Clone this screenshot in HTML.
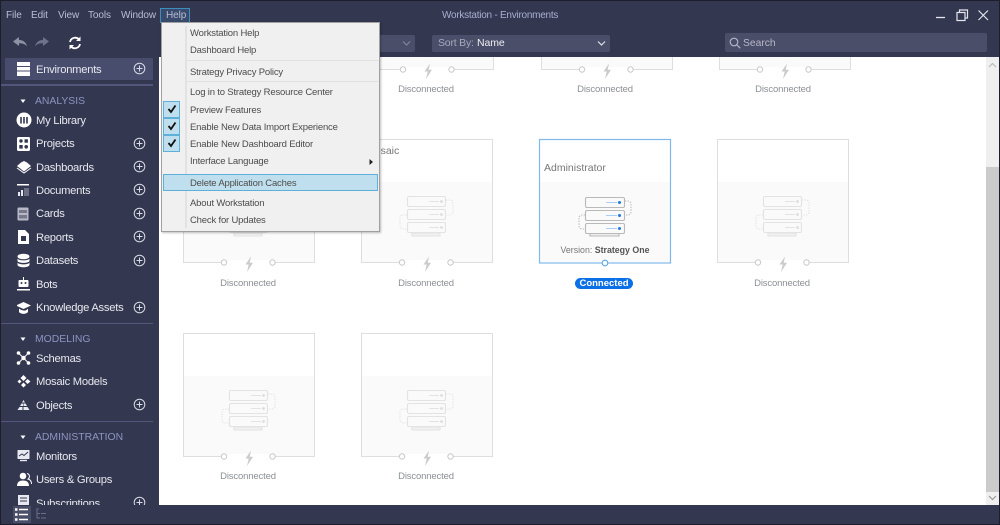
<!DOCTYPE html>
<html lang="en"><head><meta charset="utf-8"><title>Workstation - Environments</title>
<style>
*{box-sizing:border-box;margin:0;padding:0}
html,body{width:1000px;height:525px;overflow:hidden;background:#33374f;font-family:"Liberation Sans",sans-serif}
.abs,.t,.n,.m,.lab,.sec,.nav,svg.i,svg.p{position:absolute}
.t{font-size:10px;letter-spacing:-.1px;color:#b9bdd6;white-space:nowrap;line-height:14px;top:9px}
#content{position:absolute;left:159px;top:57px;width:840px;height:448px;background:#fff;overflow:hidden}
.card{position:absolute;width:132px;height:140px;overflow:visible}
.lab{width:132px;text-align:center;font-size:9.5px;letter-spacing:-.15px;color:#8c8f96;line-height:14px;white-space:nowrap}
.nav{left:36px;font-size:11.2px;letter-spacing:-.25px;color:#e8e9f0;line-height:16px;white-space:nowrap}
.sec{left:35px;font-size:10.4px;color:#8d94c2;line-height:14px;white-space:nowrap}
.sep{position:absolute;left:1px;width:152px;height:1px;background:#51567a}
svg.p{left:133px;width:13px;height:13px}
svg.i{left:16px;width:16px;height:16px}
.m{left:190px;font-size:9.5px;letter-spacing:-.18px;color:#4c4c4c;line-height:14px;white-space:nowrap}
.ms{position:absolute;left:187px;width:191px;height:1px;background:#e0e0e0}
.ck{position:absolute;left:163px;width:17px;height:17px;background:#bfdfee;border:1px solid #5fb0d9}
.ck svg{position:absolute;left:3px;top:2px;width:10px;height:10px}
</style></head><body>
<svg width="0" height="0" style="position:absolute">
<defs>
<g id="srv" fill="#fafafa" stroke="#e3e3e3" stroke-width="1.1">
<path d="M51 94h28v3H51z" fill="#f0f0f0"/>
<rect x="46.5" y="57.5" width="38" height="10" rx="1.5"/>
<rect x="46.5" y="70.5" width="38" height="10" rx="1.5"/>
<rect x="46.5" y="83.5" width="38" height="10" rx="1.5"/>
<path d="M85 61h4a3 3 0 0 1 3 3v9a3 3 0 0 1-3 3h-4M46 76h-4a3 3 0 0 0-3 3v8a3 3 0 0 0 3 3h4" fill="none" stroke-dasharray="1.3 1.3"/>
<path d="M68 62.500h10M68 75.500h10M68 88.500h10" fill="none" stroke-width=".9"/>
<circle cx="80.500" cy="62.500" r="1.400" fill="#ddd" stroke="none"/>
<circle cx="80.500" cy="75.500" r="1.400" fill="#ddd" stroke="none"/>
<circle cx="80.500" cy="88.500" r="1.400" fill="#ddd" stroke="none"/>
</g>
<g id="card">
<rect x=".5" y=".5" width="131" height="123" fill="#fff"/>
<rect x="1" y="43" width="130" height="80" fill="#fafafa"/>
<path d="M38 123.500H.5V.5h131v123H92.500" fill="none" stroke="#dedede"/>
<rect x="44" y="121" width="43" height="3" fill="#fff"/>
<circle cx="41" cy="123.500" r="2.700" fill="#fff" stroke="#c9c9c9"/>
<circle cx="89.500" cy="123.500" r="2.700" fill="#fff" stroke="#c9c9c9"/>
<path d="M68 117.500L62.500 125.500h3.200L64 133l6-9.200h-3.300z" fill="#cbcbcb"/>
<use href="#srv"/>
</g>
<g id="plus" fill="none" stroke="#d8dae6"><circle cx="6.500" cy="6.500" r="5.300"/><path d="M6.500 3.500v6M3.500 6.500h6"/></g>
</defs>
</svg>

<div id="content">
<svg class="card" style="left:25px;top:-111px"><use href="#card"/></svg>
<svg class="card" style="left:203px;top:-111px"><use href="#card"/></svg>
<svg class="card" style="left:382px;top:-111px"><use href="#card"/></svg>
<svg class="card" style="left:560px;top:-111px"><use href="#card"/></svg>
<div class="lab" style="left:23px;top:26px">Disconnected</div>
<div class="lab" style="left:201px;top:26px">Disconnected</div>
<div class="lab" style="left:380px;top:26px">Disconnected</div>
<div class="lab" style="left:558px;top:26px">Disconnected</div>

<svg class="card" style="left:24px;top:82px"><use href="#card"/></svg>
<svg class="card" style="left:202px;top:82px"><use href="#card"/></svg>
<div class="abs" style="left:207px;top:87px;font-size:10.5px;color:#777;line-height:14px">Mosaic</div>
<svg class="card" style="left:558px;top:82px"><use href="#card"/></svg>
<div class="lab" style="left:23px;top:220px">Disconnected</div>
<div class="lab" style="left:201px;top:220px">Disconnected</div>
<div class="lab" style="left:557px;top:220px">Disconnected</div>

<svg class="card" style="left:380px;top:82px">
<rect x=".5" y=".5" width="131" height="123.500" fill="#fff"/>
<rect x="1" y="43" width="130" height="80" fill="#fafafa"/>
<g fill="#fafafa" stroke="#b9b9b9" stroke-width="1.100">
<path d="M51 94h29v3H51z" fill="#eee"/>
<rect x="46.500" y="58.500" width="39" height="10" rx="1.500"/>
<rect x="46.500" y="71.500" width="39" height="10" rx="1.500"/>
<rect x="46.500" y="84.500" width="39" height="10" rx="1.500"/>
<path d="M86 62h3a3 3 0 0 1 3 3v8a3 3 0 0 1-3 3h-3M46 76h-3a3 3 0 0 0-3 3v8a3 3 0 0 0 3 3h3" fill="none" stroke-dasharray="1.300 1.300"/>
</g>
<path d="M67 63.500h11M67 76.500h11M67 89.500h11" stroke="#a9cdf3"/>
<circle cx="80.500" cy="63.500" r="1.500" fill="#1f78e6"/><circle cx="80.500" cy="76.500" r="1.500" fill="#1f78e6"/><circle cx="80.500" cy="89.500" r="1.500" fill="#1f78e6"/>
<rect x=".5" y=".5" width="131" height="123.500" fill="none" stroke="#7fb9ec" stroke-width="1.200"/>
<circle cx="66" cy="124" r="2.800" fill="#fff" stroke="#5aa4e6" stroke-width="1.100"/>
</svg>
<div class="abs" style="left:385px;top:104px;font-size:10.500px;color:#777;line-height:14px">Administrator</div>
<div class="lab" style="left:380px;top:186px;font-size:8.8px;letter-spacing:0;color:#777">Version: <b style="color:#555">Strategy One</b></div>
<div class="abs" style="left:416px;top:221px;width:58px;height:11px;border-radius:6px;background:#0b6fe6;color:#fff;font-size:9.5px;font-weight:bold;line-height:11px;text-align:center">Connected</div>

<svg class="card" style="left:24px;top:276px"><use href="#card"/></svg>
<svg class="card" style="left:202px;top:276px"><use href="#card"/></svg>
<div class="lab" style="left:23px;top:413px">Disconnected</div>
<div class="lab" style="left:201px;top:413px">Disconnected</div>

<div class="abs" style="left:827px;top:0;width:13px;height:448px;background:#efefef"></div>
<div class="abs" style="left:827px;top:110px;width:13px;height:325px;background:#cbcbcb"></div>
<svg class="abs" style="left:827px;top:3px" width="13" height="10"><path d="M3 7l3.500-3.500L10 7" fill="none" stroke="#bbb" stroke-width="1.200"/></svg>
<svg class="abs" style="left:827px;top:436px" width="13" height="10"><path d="M3 3l3.500 3.500L10 3" fill="none" stroke="#999" stroke-width="1.200"/></svg>
</div>

<div class="abs" style="left:0;top:0;width:1000px;height:1px;background:#1c1e2b"></div>
<div class="abs" style="left:0;top:0;width:1px;height:525px;background:#1c1e2b"></div>
<div class="abs" style="left:999px;top:0;width:1px;height:525px;background:#1c1e2b"></div>
<div class="abs" style="left:0;top:524px;width:1000px;height:1px;background:#1c1e2b"></div>

<div class="t" style="left:6px">File</div>
<div class="t" style="left:31px">Edit</div>
<div class="t" style="left:58px">View</div>
<div class="t" style="left:88px">Tools</div>
<div class="t" style="left:121px">Window</div>
<div class="abs" style="left:160px;top:8px;width:30px;height:15px;border:1px solid #3b8fc0;background:#3a4a6b"></div>
<div class="t" style="left:166px">Help</div>
<div class="t" style="left:442px;color:#a9aed0;letter-spacing:-.25px">Workstation - Environments</div>

<svg class="abs" style="left:12px;top:35px" width="38" height="15"><path d="M1 6.500L7 2v3c4 0 7 2 8 6.500-2-2.500-4.500-3.200-8-3.200V11z" fill="#8f92a4"/><path d="M37 6.500L31 2v3c-4 0-7 2-8 6.500 2-2.500 4.500-3.200 8-3.200V11z" fill="#6f7288"/></svg>
<svg class="abs" style="left:67px;top:35px" width="16" height="16"><path d="M3 7a5.200 5.200 0 0 1 9-2.500M13 9a5.200 5.200 0 0 1-9 2.500" fill="none" stroke="#fff" stroke-width="1.800"/><path d="M13.500 1.500v4.500H9zM2.500 14.500V10H7z" fill="#fff"/></svg>

<svg class="abs" style="left:935px;top:8px" width="56" height="14"><path d="M1 9.500h9" stroke="#e4e5ee" stroke-width="1.300"/><path d="M22 4.500h8v8h-8zM24.500 4.500V2h8v8H30" fill="none" stroke="#e4e5ee" stroke-width="1.200"/><path d="M43.500 2.500l9.500 9.500M53 2.500L43.500 12" stroke="#e4e5ee" stroke-width="1.200"/></svg>

<div class="abs" style="left:340px;top:35px;width:75px;height:17px;background:#4a4e68;border-radius:2px"></div>
<svg class="abs" style="left:402px;top:40px" width="9" height="7"><path d="M1 1.500l3.500 3.500L8 1.500" fill="none" stroke="#85889e" stroke-width="1.100"/></svg>
<div class="abs" style="left:432px;top:35px;width:178px;height:17px;background:#4a4e68;border-radius:2px"></div>
<div class="t" style="left:438px;top:36px;font-size:10.5px;letter-spacing:-.2px;color:#a6a9bd">Sort By:</div>
<div class="t" style="left:477px;top:36px;font-size:10.5px;letter-spacing:-.1px;color:#f0f0f5">Name</div>
<svg class="abs" style="left:597px;top:40px" width="9" height="7"><path d="M1 1.500l3.500 3.500L8 1.500" fill="none" stroke="#e0e1ea" stroke-width="1.200"/></svg>
<div class="abs" style="left:725px;top:33px;width:262px;height:19px;background:#4a4e68;border-radius:2px"></div>
<svg class="abs" style="left:729px;top:37px" width="12" height="12"><circle cx="5" cy="5" r="3.800" fill="none" stroke="#b8bacb" stroke-width="1.100"/><path d="M8 8l3.200 3.200" stroke="#b8bacb" stroke-width="1.200"/></svg>
<div class="t" style="left:743px;top:37px;font-size:10.3px;letter-spacing:0;color:#b8bacb">Search</div>

<div class="abs" style="left:5px;top:58px;width:148px;height:22px;background:#484c6d"></div>
<svg class="i" style="left:17px;top:61px"><path d="M0 1h13v4H0zM0 6h13v3.500H0zM0 10.500h13V15H0z" fill="#fff"/></svg>
<div class="nav" style="top:62px">Environments</div>
<svg class="p" style="top:62px"><use href="#plus"/></svg>
<div class="sep" style="top:84px;height:2px"></div>
<svg class="abs" style="left:20px;top:99px" width="7" height="5"><path d="M.5.500h5L3 4z" fill="#fff"/></svg>
<div class="sec" style="top:95px">ANALYSIS</div>

<svg class="i" style="top:112px"><circle cx="8" cy="8" r="7.500" fill="#fff"/><path d="M5 5v6.500M8 5v6.500M11 5v6.500" stroke="#33374f" stroke-width="1.600"/></svg>
<div class="nav" style="top:113px">My Library</div>

<svg class="i" style="left:17px;top:136px"><rect width="13" height="14" y="1" rx="1.500" fill="#fff"/><circle cx="4" cy="5" r="1.700" fill="#33374f"/><rect x="7.500" y="3.300" width="3.400" height="3.400" fill="#33374f"/><rect x="2.300" y="9" width="3.400" height="3.600" fill="#33374f"/><circle cx="9.200" cy="10.800" r="1.800" fill="#33374f"/></svg>
<div class="nav" style="top:136px">Projects</div>
<svg class="p" style="top:137px"><use href="#plus"/></svg>

<svg class="i" style="top:159px"><path d="M8 2l3 1.500L15 7l-7 5.500L1 7l4-3.500z" fill="#fff"/><path d="M1 9l7 5 7-5" fill="none" stroke="#fff"/></svg>
<div class="nav" style="top:160px">Dashboards</div>
<svg class="p" style="top:160px"><use href="#plus"/></svg>

<svg class="i" style="left:17px;top:182px"><path d="M0 2h12v1.500H0z" fill="#fff"/><path d="M1 10h2v4H1zM4 8h2v6H4z" fill="#e8e9f0"/><path d="M7 7h5M7 9h5M7 11h5M7 13h5" stroke="#a9abbd"/></svg>
<div class="nav" style="top:183px">Documents</div>
<svg class="p" style="top:183px"><use href="#plus"/></svg>

<svg class="i" style="left:17px;top:206px"><rect x=".5" y="1.500" width="11" height="13" rx="1" fill="#b8b9c6"/><rect x="2" y="4" width="8" height="3" fill="#33374f" opacity=".5"/><rect x="2" y="9" width="8" height="3.500" fill="#33374f" opacity=".5"/></svg>
<div class="nav" style="top:206px">Cards</div>
<svg class="p" style="top:207px"><use href="#plus"/></svg>

<svg class="i" style="left:17px;top:229px"><path d="M1 1h7l4 4v10H1z" fill="#fff"/><rect x="4" y="7" width="5" height="5" fill="#33374f"/></svg>
<div class="nav" style="top:230px">Reports</div>
<svg class="p" style="top:230px"><use href="#plus"/></svg>

<svg class="i" style="left:17px;top:253px"><ellipse cx="6.500" cy="3.500" rx="6" ry="2.800" fill="#fff"/><path d="M.5 5.500c1 2.500 11 2.500 12 0v2.500c-1 2.500-11 2.500-12 0zM.5 9.500c1 2.500 11 2.500 12 0v2.500c-1 3-11 3-12 0z" fill="#fff"/></svg>
<div class="nav" style="top:253px">Datasets</div>
<svg class="p" style="top:254px"><use href="#plus"/></svg>

<svg class="i" style="left:17px;top:276px"><path d="M6 1h1v3H6z" fill="#fff"/><rect x="1.500" y="4" width="10" height="7" rx="1" fill="#fff"/><circle cx="4.500" cy="7" r="1" fill="#33374f"/><circle cx="8.500" cy="7" r="1" fill="#33374f"/><path d="M0 13h13v1.500H0z" fill="#fff"/></svg>
<div class="nav" style="top:277px">Bots</div>

<svg class="i" style="left:17px;top:300px"><path d="M6.500 2L14 5.500 6.500 9-1 5.500z" fill="#fff"/><path d="M2 8.500c0 0 1.500 1.500 4.500 2s4.500-2 4.500-2V12c-2 2.500-7 2.500-9 0z" fill="#fff"/></svg>
<div class="nav" style="top:300px">Knowledge Assets</div>
<svg class="p" style="top:301px"><use href="#plus"/></svg>

<div class="sep" style="top:323px"></div>
<svg class="abs" style="left:20px;top:337px" width="7" height="5"><path d="M.5.500h5L3 4z" fill="#fff"/></svg>
<div class="sec" style="top:333px">MODELING</div>

<svg class="i" style="left:16px;top:350px"><circle cx="7.500" cy="8" r="2.200" fill="#fff"/><circle cx="2.500" cy="3" r="1.800" fill="#fff"/><circle cx="12.500" cy="3" r="1.800" fill="#fff"/><circle cx="2.500" cy="13" r="1.800" fill="#fff"/><circle cx="12.500" cy="13" r="1.800" fill="#fff"/><path d="M2.500 3l10 10M12.500 3l-10 10" stroke="#fff"/></svg>
<div class="nav" style="top:351px">Schemas</div>

<svg class="i" style="left:17px;top:373px"><path d="M6.500 2l3 3-3 3-3-3zM10.500 6l3 2.500-3 2.500-2.500-2.500zM2.500 6.500l2 2-2 2-2-2zM6.500 9.500l2.500 2.500-2.500 2.500L4 12z" fill="#fff"/></svg>
<div class="nav" style="top:374px">Mosaic Models</div>

<svg class="i" style="left:17px;top:397px"><path d="M6.500 3l1.500 2.500H5zM4.500 6.500h1.800V9H3zM6.800 6.500h1.800L10 9H6.800zM2.500 10h3v3H.5zM6.500 10h4l2 3h-6z" fill="#e8e9f0"/></svg>
<div class="nav" style="top:398px">Objects</div>
<svg class="p" style="top:398px"><use href="#plus"/></svg>

<div class="sep" style="top:421px"></div>
<svg class="abs" style="left:20px;top:435px" width="7" height="5"><path d="M.5.500h5L3 4z" fill="#fff"/></svg>
<div class="sec" style="top:431px">ADMINISTRATION</div>

<svg class="i" style="left:17px;top:448px"><rect x=".5" y="2" width="12" height="9" rx=".5" fill="#e8e9f0"/><path d="M2 8l3-2 2 1.500L11 4" fill="none" stroke="#33374f"/><path d="M3 12.500h7" stroke="#e8e9f0" stroke-width="1.400"/></svg>
<div class="nav" style="top:449px">Monitors</div>

<svg class="i" style="left:17px;top:471px"><circle cx="6" cy="5" r="3.300" fill="#fff"/><path d="M0 15c0-4 2.500-5.500 6-5.500s6 1.500 6 5.500z" fill="#fff"/><path d="M10 2.500a3 3 0 0 1 1 5.500c2 .5 3.500 2 3.500 5" fill="none" stroke="#fff"/></svg>
<div class="nav" style="top:472px">Users &amp; Groups</div>

<div class="abs" style="left:1px;top:495px;width:158px;height:10px;overflow:hidden">
<svg class="abs" style="left:16px;top:0" width="14" height="10"><rect x="1" y="0" width="11" height="12" fill="#e8e9f0"/><path d="M3 3h7M3 6h7" stroke="#33374f"/></svg>
<div class="nav" style="left:35px;top:1px">Subscriptions</div>
<svg class="p" style="left:132px;top:1px"><use href="#plus"/></svg>
</div>

<div class="abs" style="left:13px;top:506px;width:18px;height:17px;background:#4a4e68"></div>
<svg class="abs" style="left:15px;top:508px" width="34" height="13"><path d="M0 1.500h2.500M0 6.500h2.500M0 11.500h2.500" stroke="#fff" stroke-width="2.400"/><path d="M4 1.500h9M4 6.500h9M4 11.500h9" stroke="#fff" stroke-width="1.500"/><path d="M21 1h3M22 2v8h3M22 5.500h3M26 5.500h5M26 10h5" stroke="#6b6f8c" fill="none"/></svg>

<div class="abs" style="left:161px;top:22px;width:219px;height:210px;background:#f0f0f0;border:1px solid #a0a0a0;box-shadow:1px 1px 2px rgba(0,0,0,.25)"></div>
<div class="abs" style="left:185px;top:26px;width:2px;height:202px;background:#e2e2e2"></div>
<div class="m" style="top:27px">Workstation Help</div>
<div class="m" style="top:44px">Dashboard Help</div>
<div class="ms" style="top:60px"></div>
<div class="m" style="top:66px">Strategy Privacy Policy</div>
<div class="ms" style="top:81px"></div>
<div class="m" style="top:86px">Log in to Strategy Resource Center</div>
<div class="ck" style="top:101px"><svg viewBox="0 0 10 10"><path d="M1.500 5l2.500 3L8.500 1.500" fill="none" stroke="#111" stroke-width="1.800"/></svg></div>
<div class="ck" style="top:118px"><svg viewBox="0 0 10 10"><path d="M1.500 5l2.500 3L8.500 1.500" fill="none" stroke="#111" stroke-width="1.800"/></svg></div>
<div class="ck" style="top:135px"><svg viewBox="0 0 10 10"><path d="M1.500 5l2.500 3L8.500 1.500" fill="none" stroke="#111" stroke-width="1.800"/></svg></div>
<div class="m" style="top:104px">Preview Features</div>
<div class="m" style="top:121px">Enable New Data Import Experience</div>
<div class="m" style="top:138px">Enable New Dashboard Editor</div>
<div class="m" style="top:155px">Interface Language</div>
<svg class="abs" style="left:369px;top:159px" width="5" height="6"><path d="M.5 0L4 3 .5 6z" fill="#222"/></svg>
<div class="abs" style="left:163px;top:174px;width:215px;height:17px;background:#bfdfee;border:1px solid #5fb0d9"></div>
<div class="m" style="top:177px">Delete Application Caches</div>
<div class="m" style="top:197px">About Workstation</div>
<div class="m" style="top:214px">Check for Updates</div>
</body></html>
